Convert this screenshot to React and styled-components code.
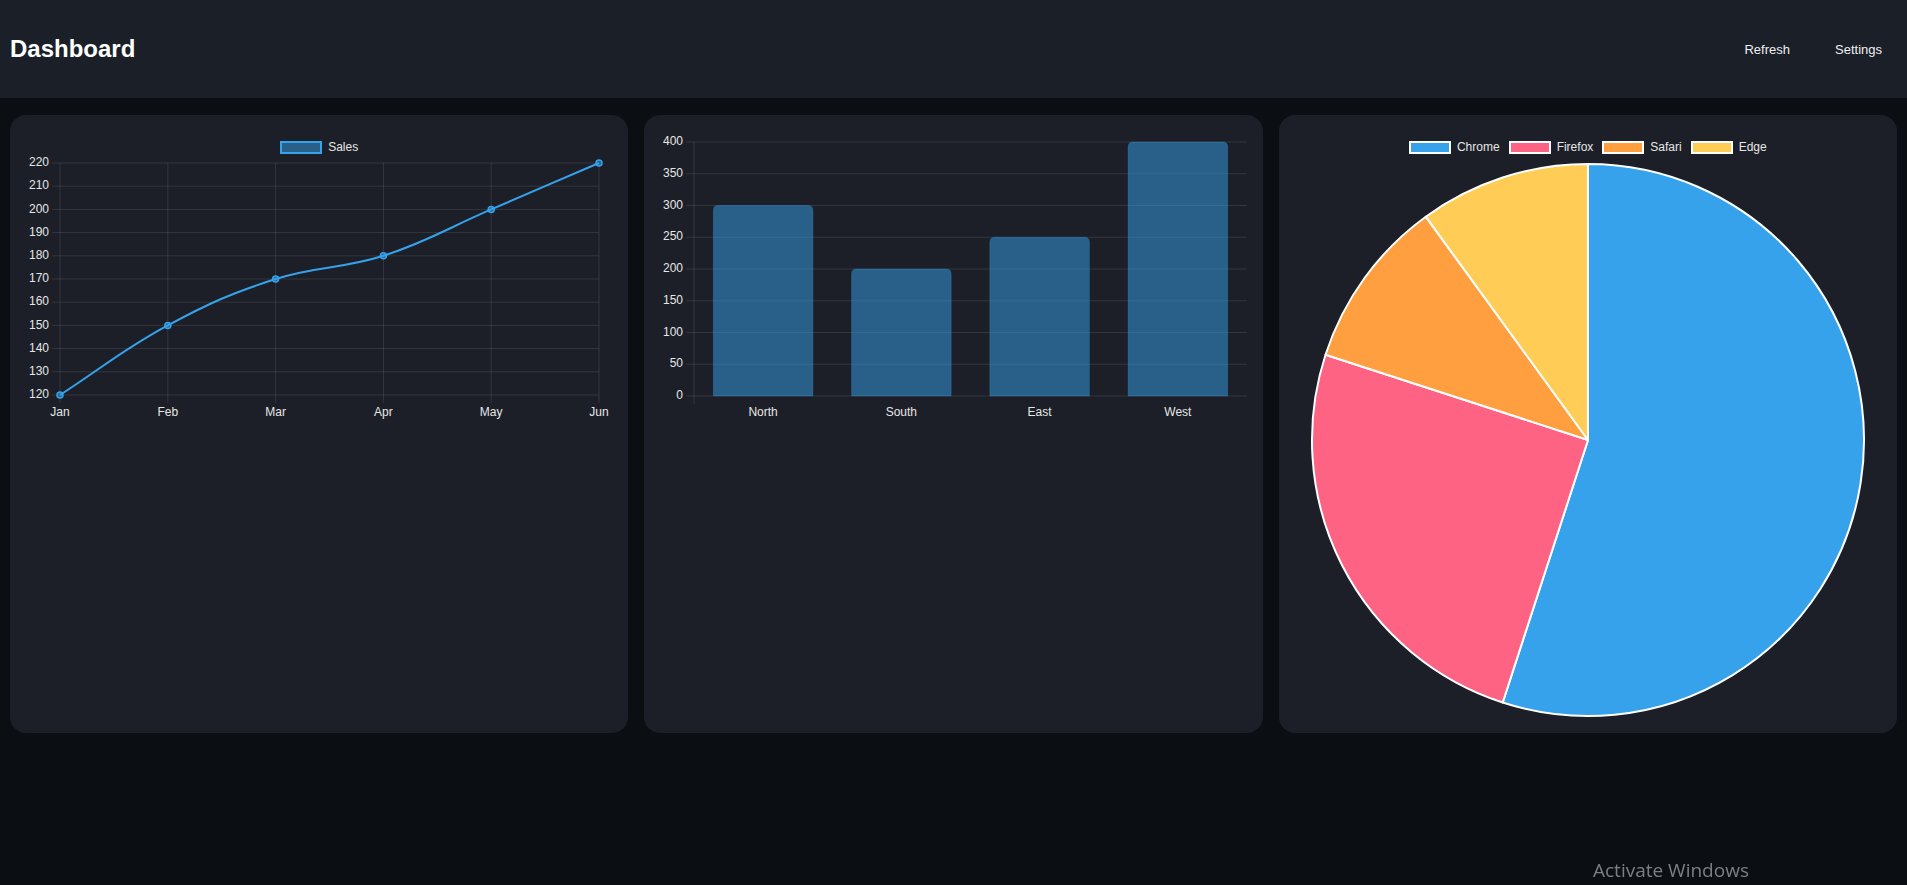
import React from 'react'
import styled, { createGlobalStyle } from 'styled-components'

const GlobalStyle = createGlobalStyle`
  html, body {
    margin: 0;
    padding: 0;
    background: #0b0e13;
    font-family: "Liberation Sans", Arial, sans-serif;
  }
`

const BLUE = '#36a2eb'
const BLUE_FILL = 'rgba(54, 162, 235, 0.5)'
const GRID = 'rgba(255, 255, 255, 0.1)'
const LABEL = '#e6e6e6'

const sales = [
    { label: 'Jan', value: 120 },
    { label: 'Feb', value: 150 },
    { label: 'Mar', value: 170 },
    { label: 'Apr', value: 180 },
    { label: 'May', value: 200 },
    { label: 'Jun', value: 220 },
]

const regions = [
    { label: 'North', value: 300 },
    { label: 'South', value: 200 },
    { label: 'East', value: 250 },
    { label: 'West', value: 400 },
]

const browsers = [
    { label: 'Chrome', value: 55, color: '#36a2eb' },
    { label: 'Firefox', value: 25, color: '#ff6384' },
    { label: 'Safari', value: 10, color: '#ff9f40' },
    { label: 'Edge', value: 10, color: '#ffcd56' },
]

// chart.js style spline (tension 0.4)
function splinePath(pts, tension = 0.4) {
    const cps = pts.map((cur, i) => {
        const prev = pts[i - 1] || cur
        const next = pts[i + 1] || cur
        const d01 = Math.hypot(cur.x - prev.x, cur.y - prev.y)
        const d12 = Math.hypot(next.x - cur.x, next.y - cur.y)
        let s01 = d01 / (d01 + d12)
        let s12 = d12 / (d01 + d12)
        s01 = isNaN(s01) ? 0 : s01
        s12 = isNaN(s12) ? 0 : s12
        const fa = tension * s01
        const fb = tension * s12
        return {
            prev: { x: cur.x - fa * (next.x - prev.x), y: cur.y - fa * (next.y - prev.y) },
            next: { x: cur.x + fb * (next.x - prev.x), y: cur.y + fb * (next.y - prev.y) },
        }
    })
    let d = `M${pts[0].x},${pts[0].y}`
    for (let i = 1; i < pts.length; i++) {
        const a = cps[i - 1].next
        const b = cps[i].prev
        d += ` C${a.x},${a.y} ${b.x},${b.y} ${pts[i].x},${pts[i].y}`
    }
    return d
}

function Legend({ items }) {
    return (
        <LegendRow>
            {items.map(item => (
                <LegendItem key={item.label}>
                    <Swatch fill={item.fill} border={item.border} />
                    {item.label}
                </LegendItem>
            ))}
        </LegendRow>
    )
}

function LineChart() {
    const xs = i => 34 + i * 107.8
    const ys = v => 242 - (v - 120) * 2.32
    const ticks = [120, 130, 140, 150, 160, 170, 180, 190, 200, 210, 220]
    const pts = sales.map((d, i) => ({ x: xs(i), y: ys(d.value) }))
    return (
        <>
            <Legend items={[{ label: 'Sales', fill: BLUE_FILL, border: BLUE }]} />
            <ChartSvg width="586" height="271">
                {ticks.map(t => (
                    <g key={t}>
                        <line x1="26" x2={xs(5)} y1={ys(t)} y2={ys(t)} stroke={GRID} />
                        <AxisText x="23" y={ys(t)} textAnchor="end" dominantBaseline="middle">{t}</AxisText>
                    </g>
                ))}
                {sales.map((d, i) => (
                    <g key={d.label}>
                        <line x1={xs(i)} x2={xs(i)} y1="10" y2="250" stroke={GRID} />
                        <AxisText x={xs(i)} y="260" textAnchor="middle" dominantBaseline="middle">{d.label}</AxisText>
                    </g>
                ))}
                <path d={splinePath(pts)} fill="none" stroke={BLUE} strokeWidth="2" />
                {pts.map((p, i) => (
                    <circle key={i} cx={p.x} cy={p.y} r="3" fill={BLUE_FILL} stroke={BLUE} strokeWidth="1.5" />
                ))}
            </ChartSvg>
        </>
    )
}

function BarChart() {
    const left = 34
    const right = 587
    const step = (right - left) / regions.length
    const barW = step * 0.72
    const ys = v => 265 - v * 0.635
    const ticks = [0, 50, 100, 150, 200, 250, 300, 350, 400]
    const r = 5
    return (
        <ChartSvg width="586" height="293">
            {ticks.map(t => (
                <g key={t}>
                    <line x1="26" x2={right} y1={ys(t)} y2={ys(t)} stroke={GRID} />
                    <AxisText x="23" y={ys(t)} textAnchor="end" dominantBaseline="middle">{t}</AxisText>
                </g>
            ))}
            <line x1={left} x2={left} y1={ys(400)} y2={ys(0) + 8} stroke={GRID} />
            {regions.map((d, i) => {
                const cx = left + step * (i + 0.5)
                const x0 = cx - barW / 2
                const x1 = cx + barW / 2
                const top = ys(d.value)
                const base = ys(0)
                const path = `M${x0},${base} L${x0},${top + r} Q${x0},${top} ${x0 + r},${top} L${x1 - r},${top} Q${x1},${top} ${x1},${top + r} L${x1},${base} Z`
                return (
                    <g key={d.label}>
                        <path d={path} fill={BLUE_FILL} stroke="rgba(54,162,235,0.25)" strokeWidth="1" />
                        <AxisText x={cx} y="282" textAnchor="middle" dominantBaseline="middle">{d.label}</AxisText>
                    </g>
                )
            })}
        </ChartSvg>
    )
}

function PieChart() {
    const cx = 293
    const cy = 287
    const r = 276
    const total = browsers.reduce((s, b) => s + b.value, 0)
    let angle = -Math.PI / 2
    const slices = browsers.map(b => {
        const a0 = angle
        const a1 = angle + (b.value / total) * Math.PI * 2
        angle = a1
        const large = a1 - a0 > Math.PI ? 1 : 0
        const p0 = [cx + r * Math.cos(a0), cy + r * Math.sin(a0)]
        const p1 = [cx + r * Math.cos(a1), cy + r * Math.sin(a1)]
        return {
            ...b,
            d: `M${cx},${cy} L${p0[0]},${p0[1]} A${r},${r} 0 ${large} 1 ${p1[0]},${p1[1]} Z`,
        }
    })
    return (
        <>
            <Legend items={browsers.map(b => ({ label: b.label, fill: b.color, border: '#fff' }))} />
            <ChartSvg width="586" height="564">
                {slices.map(s => (
                    <path key={s.label} d={s.d} fill={s.color} stroke="#fff" strokeWidth="2" strokeLinejoin="round" />
                ))}
            </ChartSvg>
        </>
    )
}

export default function App() {
    return (
        <Page>
            <GlobalStyle />
            <Header>
                <Title>Dashboard</Title>
                <Nav>
                    <NavButton>Refresh</NavButton>
                    <NavButton>Settings</NavButton>
                </Nav>
            </Header>
            <Grid>
                <Card><LineChart /></Card>
                <Card><BarChart /></Card>
                <Card><PieChart /></Card>
            </Grid>
            <Watermark>Activate Windows</Watermark>
        </Page>
    )
}

const Page = styled.div`
    min-height: 885px;
    background: #0b0e13;
    color: #fff;
`

const Header = styled.header`
    height: 98px;
    display: flex;
    align-items: center;
    justify-content: space-between;
    padding: 0 9px 0 10px;
    background: #1b1f28;
`

const Title = styled.h1`
    margin: 0;
    font-size: 24px;
    font-weight: 700;
    color: #fff;
`

const Nav = styled.nav`
    display: flex;
    gap: 13px;
`

const NavButton = styled.button`
    background: transparent;
    border: none;
    color: #f0f0f0;
    font-family: "Liberation Sans", Arial, sans-serif;
    font-size: 13px;
    padding: 8px 16px;
    cursor: pointer;
`

const Grid = styled.main`
    display: grid;
    grid-template-columns: repeat(3, 1fr);
    gap: 16px;
    padding: 17px 10px;
    align-items: stretch;
`

const Card = styled.section`
    background: #1c1f27;
    border-radius: 16px;
    padding: 16px;
    display: flex;
    flex-direction: column;
    min-width: 0;
`

const LegendRow = styled.div`
    display: flex;
    justify-content: center;
    align-items: center;
    gap: 9px;
    height: 22px;
    padding-top: 10px;
    box-sizing: border-box;
`

const LegendItem = styled.div`
    display: flex;
    align-items: center;
    gap: 6px;
    font-size: 12px;
    color: ${LABEL};
    line-height: 13px;
`

const Swatch = styled.span`
    display: block;
    box-sizing: border-box;
    width: 42px;
    height: 13px;
    background: ${p => p.fill};
    border: 2px solid ${p => p.border};
`

const ChartSvg = styled.svg`
    display: block;
    overflow: visible;
`

const AxisText = styled.text`
    font-family: "Liberation Sans", Arial, sans-serif;
    font-size: 12px;
    fill: ${LABEL};
`

const Watermark = styled.div`
    position: fixed;
    left: 1593px;
    top: 857px;
    font-family: "Open Sans", "Noto Sans", sans-serif;
    font-size: 19px;
    color: #7c7f85;
    pointer-events: none;
`
